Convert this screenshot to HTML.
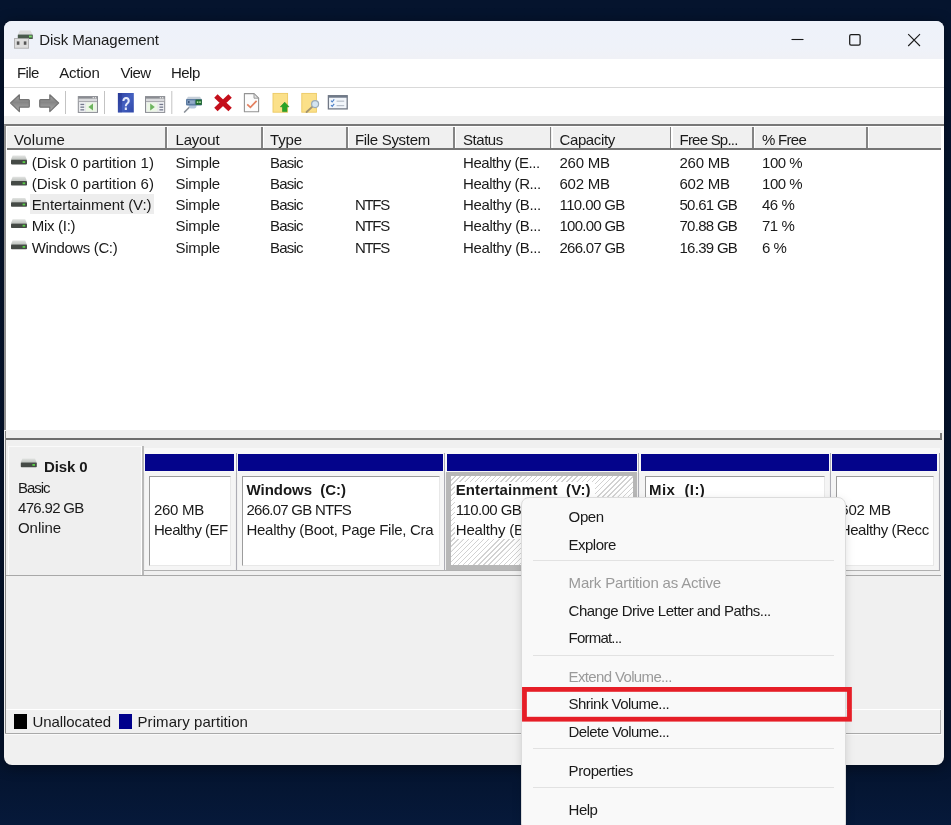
<!DOCTYPE html>
<html lang="en">
<head>
<meta charset="utf-8">
<title>Disk Management</title>
<style>
html,body{margin:0;padding:0;}
body{width:951px;height:825px;overflow:hidden;position:relative;background:linear-gradient(180deg,#05142e 0%,#04132d 92%,#06193a 100%);font-family:"Liberation Sans",sans-serif;font-size:15px;color:#1a1a1a;}
.abs,.t{position:absolute;}
.t{white-space:nowrap;line-height:20px;}
#layer{position:absolute;left:0;top:0;width:951px;height:825px;will-change:transform;}
.titlebar{left:4px;top:21px;width:940px;height:38px;background:linear-gradient(180deg,#eef2fa 0%,#eff2f9 70%,#f0f1f6 100%);border-radius:8px 8px 0 0;}
.menubar{left:4px;top:59px;width:940px;height:28px;background:#fff;}
.toolbar{left:4px;top:87px;width:940px;height:29px;background:#fff;border-top:1px solid #d9d9d9;box-sizing:border-box;}
.list{left:4px;top:124.3px;width:940px;height:306.2px;background:#fff;border-top:2px solid #787878;border-left:2px solid #8e8e8e;box-sizing:border-box;}
.hdr{left:7px;top:126px;width:934px;height:22px;background:#f0f0f0;border-bottom:2px solid #757575;box-sizing:content-box;}
.sel{left:29.7px;top:193.8px;width:124px;height:19.8px;background:#ededed;}
.split{left:5px;top:438.4px;width:936.6px;height:1.6px;background:#6f6f6f;}
.pane{left:6px;top:440px;width:935px;height:293px;background:#f0f0f0;}
.dlabel{left:7.5px;top:446px;width:132.5px;height:129px;background:#efefef;border-right:1px solid #fff;border-top:1px solid #fafafa;border-left:1px solid #fafafa;box-sizing:content-box;box-shadow:2px 0 0 #b9b9b9;}
.rowline{left:6px;top:575px;width:935px;height:1px;background:#a8a8a8;}
.bar{top:454px;height:17px;background:#04048b;}
.pframe{top:472px;height:98px;background:#e4e4e4;box-sizing:border-box;border:1px solid #c9c9c9;border-top:none;}
.pbody{top:475.5px;height:90px;background:#fff;box-sizing:border-box;border:1px solid #9c9c9c;border-right-color:#e8e8e8;border-bottom-color:#e8e8e8;}
.hatch{background:#fff repeating-linear-gradient(135deg,#fff 0,#fff 2.6px,#d2d2d2 2.7px,#d2d2d2 3.6px);}
.legendline{left:6px;top:709px;width:935px;height:1px;background:#fff;}
.statusline{left:5px;top:733px;width:936px;height:1.5px;background:#a9a9a9;}
.menu{left:520.6px;top:497px;width:325.6px;height:335px;background:#f9f9f9;border-radius:8px;border:1px solid #dcdcdc;box-sizing:border-box;box-shadow:0 3px 10px rgba(0,0,0,.13);}
.msep{left:533px;width:301px;height:1px;background:#e2e2e2;}
</style>
</head>
<body>
<div id="layer">
<div class="abs" style="left:4px;top:21px;width:940px;height:743.6px;border-radius:8px;background:#f0f0f0;box-shadow:0 2px 14px rgba(0,0,0,.4);"></div>
<div class="abs titlebar"></div>
<div class="abs menubar"></div>
<div class="abs toolbar"></div>
<div class="abs list"></div>
<div class="abs hdr"></div>
<div class="abs" style="left:165.3px;top:126.5px;width:1.7px;height:21.5px;background:#848484"></div><div class="abs" style="left:167.0px;top:126.5px;width:1.2px;height:21.5px;background:#fff"></div>
<div class="abs" style="left:261.0px;top:126.5px;width:1.7px;height:21.5px;background:#848484"></div><div class="abs" style="left:262.7px;top:126.5px;width:1.2px;height:21.5px;background:#fff"></div>
<div class="abs" style="left:346.1px;top:126.5px;width:1.7px;height:21.5px;background:#848484"></div><div class="abs" style="left:347.8px;top:126.5px;width:1.2px;height:21.5px;background:#fff"></div>
<div class="abs" style="left:453.2px;top:126.5px;width:1.7px;height:21.5px;background:#848484"></div><div class="abs" style="left:454.9px;top:126.5px;width:1.2px;height:21.5px;background:#fff"></div>
<div class="abs" style="left:549.8px;top:126.5px;width:1.7px;height:21.5px;background:#848484"></div><div class="abs" style="left:551.5px;top:126.5px;width:1.2px;height:21.5px;background:#fff"></div>
<div class="abs" style="left:669.7px;top:126.5px;width:1.7px;height:21.5px;background:#848484"></div><div class="abs" style="left:671.4px;top:126.5px;width:1.2px;height:21.5px;background:#fff"></div>
<div class="abs" style="left:752.3px;top:126.5px;width:1.7px;height:21.5px;background:#848484"></div><div class="abs" style="left:754.0px;top:126.5px;width:1.2px;height:21.5px;background:#fff"></div>
<div class="abs" style="left:866.2px;top:126.5px;width:1.7px;height:21.5px;background:#848484"></div><div class="abs" style="left:867.9px;top:126.5px;width:1.2px;height:21.5px;background:#fff"></div>
<div class="abs" style="left:7px;top:126.3px;width:935px;height:1.2px;background:#fff"></div>
<div class="abs sel"></div>
<div class="abs split"></div>
<div class="abs" style="left:4.8px;top:431px;width:1.5px;height:302.5px;background:#858585"></div>
<div class="abs" style="left:940px;top:433px;width:1.6px;height:6px;background:#7a7a7a"></div>
<div class="abs pane"></div>
<div class="abs dlabel"></div>
<div class="abs rowline"></div>
<div class="abs" style="left:144px;top:447.5px;width:796px;height:25px;background:#f8f8f8"></div>
<div class="abs bar" style="left:145px;width:89px"></div>
<div class="abs" style="left:144.5px;top:472px;width:90px;height:98px;background:#f5f5f5"></div>
<div class="abs pbody" style="left:149px;width:81.5px"></div>
<div class="abs bar" style="left:238px;width:205px"></div>
<div class="abs" style="left:237.5px;top:472px;width:206px;height:98px;background:#f5f5f5"></div>
<div class="abs pbody" style="left:242px;width:197.5px"></div>
<div class="abs bar" style="left:446.5px;width:190.5px"></div>
<div class="abs" style="left:446.0px;top:472px;width:191.0px;height:98px;background:#b7b7b7"></div>
<div class="abs hatch" style="left:450.5px;top:476px;width:182.5px;height:89px"></div>
<div class="abs bar" style="left:640.5px;width:188.0px"></div>
<div class="abs" style="left:640.0px;top:472px;width:189.0px;height:98px;background:#f5f5f5"></div>
<div class="abs pbody" style="left:644.5px;width:180.0px"></div>
<div class="abs bar" style="left:831.5px;width:105.5px"></div>
<div class="abs" style="left:831.0px;top:472px;width:106.5px;height:98px;background:#f5f5f5"></div>
<div class="abs pbody" style="left:835.5px;width:98.0px"></div>
<div class="abs" style="left:235.5px;top:453px;width:1.4px;height:118px;background:#adadb5"></div>
<div class="abs" style="left:444.0px;top:453px;width:1.4px;height:118px;background:#adadb5"></div>
<div class="abs" style="left:638.0px;top:453px;width:1.4px;height:118px;background:#adadb5"></div>
<div class="abs" style="left:829.5px;top:453px;width:1.4px;height:118px;background:#adadb5"></div>
<div class="abs" style="left:938.5px;top:453px;width:1.4px;height:118px;background:#adadb5"></div>
<div class="abs" style="left:144px;top:570px;width:796px;height:1px;background:#b0b0b0"></div>
<div class="abs" style="left:455px;top:481.5px;width:140px;height:19.5px;background:#fff"></div>
<div class="abs" style="left:455px;top:501px;width:110px;height:38px;background:#fff"></div>
<div class="abs legendline"></div>
<div class="abs" style="left:14px;top:714px;width:13px;height:15px;background:#000;"></div>
<div class="abs" style="left:119px;top:714px;width:13px;height:15px;background:#00008b;"></div>
<div class="abs statusline"></div>
<div class="abs" style="left:940px;top:710px;width:1px;height:23px;background:#b5b5b5"></div>
<div class="abs" style="left:5px;top:734.3px;width:937px;height:1px;background:#fafafa"></div>
<svg class="abs" style="left:0;top:0" width="951" height="825" viewBox="0 0 951 825">
<defs>
<linearGradient id="gArr" x1="0" y1="0" x2="0" y2="1"><stop offset="0" stop-color="#a4a4a4"/><stop offset="0.45" stop-color="#858585"/><stop offset="1" stop-color="#adadad"/></linearGradient>
<linearGradient id="gHelp" x1="0" y1="0" x2="1" y2="1"><stop offset="0" stop-color="#2c3f9f"/><stop offset="0.5" stop-color="#4460c0"/><stop offset="1" stop-color="#2f48a8"/></linearGradient>
<linearGradient id="gDisk" x1="0" y1="0" x2="0" y2="1"><stop offset="0" stop-color="#e2e4e2"/><stop offset="1" stop-color="#bcc0bc"/></linearGradient>
<g id="hdd">
<path d="M1.8 0 H14.4 L16.2 4.4 H0 Z" fill="url(#gDisk)"/>
<rect x="0.2" y="4.2" width="16" height="4.6" rx="0.8" fill="#454a46"/>
<rect x="11.8" y="5.6" width="2.6" height="1.8" fill="#58d046"/>
</g>
</defs>
<!-- back / forward arrows -->
<path d="M10.6 103 L19.4 94.8 V99.6 H28.4 Q29.3 99.6 29.3 100.5 V106.3 Q29.3 107.2 28.4 107.2 H19.4 V111.6 Z" fill="url(#gArr)" stroke="#747474" stroke-width="1.2" stroke-linejoin="round"/>
<path d="M58.6 103 L49.8 94.8 V99.6 H40.6 Q39.7 99.6 39.7 100.5 V106.3 Q39.7 107.2 40.6 107.2 H49.8 V111.6 Z" fill="url(#gArr)" stroke="#747474" stroke-width="1.2" stroke-linejoin="round"/>
<!-- separators -->
<rect x="65" y="91" width="1" height="23" fill="#c3c3c3"/>
<rect x="104" y="91" width="1" height="23" fill="#c3c3c3"/>
<rect x="171.3" y="91" width="1" height="23" fill="#c3c3c3"/>
<!-- show/hide tree -->
<g>
<rect x="78.3" y="96.6" width="19.2" height="15.8" fill="#e6e7ea" stroke="#8b8d93" stroke-width="1"/>
<rect x="78.3" y="96.6" width="19.2" height="2.2" fill="#8a8c92"/>
<rect x="92.6" y="97.1" width="1.4" height="1.2" fill="#e8e8e8"/><rect x="94.8" y="97.1" width="1.4" height="1.2" fill="#e8e8e8"/>
<rect x="78.8" y="98.8" width="18.2" height="2.4" fill="#d9dadd"/>
<rect x="78.8" y="101.2" width="18.2" height="0.8" fill="#9b9da3"/>
<rect x="79.6" y="102.6" width="5.4" height="9" fill="#f1f2f5"/>
<rect x="80.4" y="103.8" width="3.8" height="1.3" fill="#73788c"/><rect x="80.4" y="106.5" width="3.8" height="1.3" fill="#73788c"/><rect x="80.4" y="109.2" width="3.8" height="1.3" fill="#73788c"/>
<rect x="86" y="102.6" width="10.6" height="9" fill="#ecf6e6"/>
<path d="M93 103.6 V110.6 L88.4 107.1 Z" fill="#6db45f"/>
</g>
<!-- help -->
<g>
<rect x="117.9" y="93" width="15.9" height="19.5" fill="url(#gHelp)"/>
<rect x="117.9" y="93" width="4" height="19.5" fill="#1f2f86" opacity="0.35"/>
<text transform="translate(126.2 109.6) scale(0.82 1)" font-family="Liberation Sans, sans-serif" font-weight="bold" font-size="17.5" fill="#e6ebfb" text-anchor="middle">?</text>
</g>
<!-- action pane -->
<g>
<rect x="145.5" y="96.6" width="19.2" height="15.8" fill="#e6e7ea" stroke="#8b8d93" stroke-width="1"/>
<rect x="145.5" y="96.6" width="19.2" height="2.2" fill="#8a8c92"/>
<rect x="159.8" y="97.1" width="1.4" height="1.2" fill="#e8e8e8"/><rect x="162" y="97.1" width="1.4" height="1.2" fill="#e8e8e8"/>
<rect x="146" y="98.8" width="18.2" height="2.4" fill="#d9dadd"/>
<rect x="146" y="101.2" width="18.2" height="0.8" fill="#9b9da3"/>
<rect x="146.8" y="102.6" width="10.6" height="9" fill="#ecf6e6"/>
<path d="M150.2 103.6 V110.6 L154.8 107.1 Z" fill="#6db45f"/>
<rect x="158.6" y="102.6" width="5.4" height="9" fill="#f1f2f5"/>
<rect x="159.4" y="103.8" width="3.8" height="1.3" fill="#73788c"/><rect x="159.4" y="106.5" width="3.8" height="1.3" fill="#73788c"/><rect x="159.4" y="109.2" width="3.8" height="1.3" fill="#73788c"/>
</g>
<!-- connect -->
<g>
<path d="M184.6 112 L189.6 107" stroke="#8b9199" stroke-width="1.7" stroke-linecap="round"/>
<ellipse cx="192.6" cy="105.4" rx="4" ry="3.2" fill="#b4c6dc"/>
<path d="M188 96.8 H200 L201.8 99.2 H186.2 Z" fill="#c6cfd9"/>
<rect x="186" y="99" width="16" height="6.4" rx="0.8" fill="#5d7da3"/>
<rect x="187.4" y="100.4" width="7.4" height="3.4" fill="#93abc9"/>
<rect x="188" y="101" width="1.6" height="2.2" fill="#3f587c"/>
<rect x="195.6" y="99.6" width="6.2" height="5.2" fill="#1f6a2c"/>
<rect x="196.8" y="101.4" width="1.6" height="1.5" fill="#bff0b4"/><rect x="199.2" y="101.4" width="1.6" height="1.5" fill="#bff0b4"/>
</g>
<!-- red X -->
<path d="M215.9 96 L230.1 109.6 M230.1 96 L215.9 109.6" stroke="#c40f1b" stroke-width="4.9" stroke-linecap="butt"/>
<!-- doc check -->
<g>
<path d="M244.4 93.6 H254 L258.6 98.2 V111.8 H244.4 Z" fill="#fcfcfc" stroke="#939393" stroke-width="1.1" stroke-linejoin="round"/>
<path d="M254 93.6 V98.2 H258.6 Z" fill="#e4e4e4" stroke="#939393" stroke-width="0.9" stroke-linejoin="round"/>
<path d="M247.2 104.4 L250.4 107.4 L256.6 100.8" fill="none" stroke="#e4805f" stroke-width="1.7"/>
</g>
<!-- export list (yellow, green arrow) -->
<g>
<rect x="273" y="93.4" width="14.6" height="18.8" fill="#fbe089" stroke="#ecc963" stroke-width="0.9"/>
<path d="M284.7 102.2 L289 106.8 H286.9 V111.6 H282.5 V106.8 H280.4 Z" fill="#2aa427" stroke="#1f8f20" stroke-width="0.6" stroke-linejoin="round"/>
</g>
<!-- find (yellow, magnifier) -->
<g>
<rect x="301.8" y="93.4" width="14.6" height="18.8" fill="#fbe089" stroke="#ecc963" stroke-width="0.9"/>
<path d="M306.6 112 L312.4 106.6" stroke="#a3946f" stroke-width="1.9" stroke-linecap="round"/>
<circle cx="315.1" cy="104.1" r="3.5" fill="#d3e4f1" stroke="#9aa9b6" stroke-width="1.2"/>
</g>
<!-- checklist -->
<g>
<rect x="328.4" y="95.7" width="18.8" height="13.2" fill="#f2f6fb" stroke="#717885" stroke-width="1.3"/>
<rect x="328.4" y="95.7" width="18.8" height="2" fill="#6f7a89"/>
<path d="M331 100.6 l1.2 1.4 l2 -2.6 M331 105 l1.2 1.4 l2 -2.6" fill="none" stroke="#4a7fc8" stroke-width="1.1"/>
<rect x="336.6" y="100.6" width="7.6" height="1.2" fill="#b7bfca"/><rect x="336.6" y="105" width="7.6" height="1.2" fill="#b7bfca"/>
</g>
<!-- title icon -->
<g>
<path d="M20 30.6 H30.4 L32.6 34.2 H17.8 Z" fill="#dcdcdc"/>
<rect x="17.8" y="34.4" width="15" height="4.6" rx="0.6" fill="#4a5a4c"/>
<rect x="29" y="35.6" width="2.8" height="1.8" fill="#7be06a"/>
<rect x="14.4" y="38.6" width="14.2" height="9.6" fill="#dedede" stroke="#a7a7a7" stroke-width="0.8"/>
<rect x="16.8" y="41.4" width="2.6" height="3.4" fill="#555"/><rect x="23.8" y="41.4" width="2.6" height="3.4" fill="#555"/>
</g>
<!-- list disk icons -->
<use href="#hdd" x="10.8" y="155.6"/>
<use href="#hdd" x="10.8" y="176.8"/>
<use href="#hdd" x="10.8" y="198"/>
<use href="#hdd" x="10.8" y="219.2"/>
<use href="#hdd" x="10.8" y="240.4"/>
<use href="#hdd" x="20.6" y="458.4"/>
<!-- caption buttons -->
<path d="M791.5 39.5 H803.5" stroke="#1a1a1a" stroke-width="1.1"/>
<rect x="849.7" y="34.7" width="10.4" height="10.4" rx="1.4" fill="none" stroke="#1a1a1a" stroke-width="1.25"/>
<path d="M908.2 34.2 L920 46 M920 34.2 L908.2 46" stroke="#1a1a1a" stroke-width="1.1"/>
</svg>

<span class="t" style="left:39.2px;top:30.1px;color:#1b1b1b;letter-spacing:-0.075px;">Disk Management</span>
<span class="t" style="left:17.0px;top:63.1px;letter-spacing:-0.621px;">File</span>
<span class="t" style="left:59.3px;top:63.1px;letter-spacing:-0.237px;">Action</span>
<span class="t" style="left:120.6px;top:63.1px;letter-spacing:-0.614px;">View</span>
<span class="t" style="left:170.9px;top:63.1px;letter-spacing:-0.503px;">Help</span>
<span class="t" style="left:14.0px;top:130.0px;letter-spacing:0.173px;">Volume</span>
<span class="t" style="left:175.5px;top:130.0px;letter-spacing:-0.190px;">Layout</span>
<span class="t" style="left:270.0px;top:130.0px;letter-spacing:-0.152px;">Type</span>
<span class="t" style="left:355.0px;top:130.0px;letter-spacing:-0.320px;">File System</span>
<span class="t" style="left:463.0px;top:130.0px;letter-spacing:-0.460px;">Status</span>
<span class="t" style="left:559.5px;top:130.0px;letter-spacing:-0.381px;">Capacity</span>
<span class="t" style="left:679.5px;top:130.0px;letter-spacing:-0.775px;">Free Sp...</span>
<span class="t" style="left:762.0px;top:130.0px;letter-spacing:-0.702px;">% Free</span>
<span class="t" style="left:31.7px;top:152.8px;letter-spacing:0.030px;">(Disk 0 partition 1)</span>
<span class="t" style="left:175.5px;top:152.8px;letter-spacing:-0.247px;">Simple</span>
<span class="t" style="left:270.0px;top:152.8px;letter-spacing:-0.819px;">Basic</span>
<span class="t" style="left:463.0px;top:152.8px;letter-spacing:-0.443px;">Healthy (E...</span>
<span class="t" style="left:559.5px;top:152.8px;letter-spacing:-0.219px;">260 MB</span>
<span class="t" style="left:679.5px;top:152.8px;letter-spacing:-0.219px;">260 MB</span>
<span class="t" style="left:762.0px;top:152.8px;letter-spacing:-0.455px;">100 %</span>
<span class="t" style="left:31.7px;top:174.0px;letter-spacing:0.030px;">(Disk 0 partition 6)</span>
<span class="t" style="left:175.5px;top:174.0px;letter-spacing:-0.247px;">Simple</span>
<span class="t" style="left:270.0px;top:174.0px;letter-spacing:-0.819px;">Basic</span>
<span class="t" style="left:463.0px;top:174.0px;letter-spacing:-0.429px;">Healthy (R...</span>
<span class="t" style="left:559.5px;top:174.0px;letter-spacing:-0.219px;">602 MB</span>
<span class="t" style="left:679.5px;top:174.0px;letter-spacing:-0.219px;">602 MB</span>
<span class="t" style="left:762.0px;top:174.0px;letter-spacing:-0.455px;">100 %</span>
<span class="t" style="left:31.7px;top:195.2px;letter-spacing:-0.078px;">Entertainment (V:)</span>
<span class="t" style="left:175.5px;top:195.2px;letter-spacing:-0.247px;">Simple</span>
<span class="t" style="left:270.0px;top:195.2px;letter-spacing:-0.819px;">Basic</span>
<span class="t" style="left:355.0px;top:195.2px;letter-spacing:-1.335px;">NTFS</span>
<span class="t" style="left:463.0px;top:195.2px;letter-spacing:-0.362px;">Healthy (B...</span>
<span class="t" style="left:559.5px;top:195.2px;letter-spacing:-0.601px;">110.00 GB</span>
<span class="t" style="left:679.5px;top:195.2px;letter-spacing:-0.719px;">50.61 GB</span>
<span class="t" style="left:762.0px;top:195.2px;letter-spacing:-0.487px;">46 %</span>
<span class="t" style="left:31.7px;top:216.4px;letter-spacing:-0.270px;">Mix (I:)</span>
<span class="t" style="left:175.5px;top:216.4px;letter-spacing:-0.247px;">Simple</span>
<span class="t" style="left:270.0px;top:216.4px;letter-spacing:-0.819px;">Basic</span>
<span class="t" style="left:355.0px;top:216.4px;letter-spacing:-1.335px;">NTFS</span>
<span class="t" style="left:463.0px;top:216.4px;letter-spacing:-0.362px;">Healthy (B...</span>
<span class="t" style="left:559.5px;top:216.4px;letter-spacing:-0.732px;">100.00 GB</span>
<span class="t" style="left:679.5px;top:216.4px;letter-spacing:-0.719px;">70.88 GB</span>
<span class="t" style="left:762.0px;top:216.4px;letter-spacing:-0.487px;">71 %</span>
<span class="t" style="left:31.7px;top:237.6px;letter-spacing:-0.367px;">Windows (C:)</span>
<span class="t" style="left:175.5px;top:237.6px;letter-spacing:-0.247px;">Simple</span>
<span class="t" style="left:270.0px;top:237.6px;letter-spacing:-0.819px;">Basic</span>
<span class="t" style="left:355.0px;top:237.6px;letter-spacing:-1.335px;">NTFS</span>
<span class="t" style="left:463.0px;top:237.6px;letter-spacing:-0.362px;">Healthy (B...</span>
<span class="t" style="left:559.5px;top:237.6px;letter-spacing:-0.732px;">266.07 GB</span>
<span class="t" style="left:679.5px;top:237.6px;letter-spacing:-0.719px;">16.39 GB</span>
<span class="t" style="left:762.0px;top:237.6px;letter-spacing:-0.544px;">6 %</span>
<span class="t" style="left:44.0px;top:457.3px;font-weight:bold;letter-spacing:-0.128px;">Disk 0</span>
<span class="t" style="left:18.0px;top:477.5px;letter-spacing:-1.042px;">Basic</span>
<span class="t" style="left:18.0px;top:497.5px;letter-spacing:-0.673px;">476.92 GB</span>
<span class="t" style="left:18.0px;top:517.5px;letter-spacing:-0.065px;">Online</span>
<span class="t" style="left:154.0px;top:499.8px;letter-spacing:-0.310px;">260 MB</span>
<span class="t" style="left:154.0px;top:519.8px;letter-spacing:-0.496px;">Healthy (EF</span>
<span class="t" style="left:246.5px;top:479.8px;font-weight:bold;letter-spacing:-0.028px;">Windows&nbsp; (C:)</span>
<span class="t" style="left:246.5px;top:499.8px;letter-spacing:-0.745px;">266.07 GB NTFS</span>
<span class="t" style="left:246.5px;top:519.8px;letter-spacing:-0.284px;">Healthy (Boot, Page File, Cra</span>
<span class="t" style="left:455.8px;top:479.8px;font-weight:bold;letter-spacing:0.072px;">Entertainment&nbsp; (V:)</span>
<span class="t" style="left:455.8px;top:499.8px;letter-spacing:-0.578px;">110.00 GB</span>
<span class="t" style="left:455.8px;top:519.8px;letter-spacing:-0.193px;">Healthy (B</span>
<span class="t" style="left:649.0px;top:479.8px;font-weight:bold;letter-spacing:0.412px;">Mix&nbsp; (I:)</span>
<span class="t" style="left:840.3px;top:499.8px;letter-spacing:-0.182px;">602 MB</span>
<span class="t" style="left:839.7px;top:519.8px;letter-spacing:-0.392px;">Healthy (Recc</span>
<span class="t" style="left:32.5px;top:711.8px;letter-spacing:-0.068px;">Unallocated</span>
<span class="t" style="left:137.5px;top:711.8px;letter-spacing:0.079px;">Primary partition</span>
<div class="abs menu"></div>
<div class="abs msep" style="top:560.3px"></div>
<div class="abs msep" style="top:654.8px"></div>
<div class="abs msep" style="top:748px"></div>
<div class="abs msep" style="top:787px"></div>
<svg class="abs" style="left:515px;top:680px" width="345" height="50" viewBox="515 680 345 50"><rect x="524.45" y="689.4" width="325" height="29.8" fill="none" stroke="#e61e27" stroke-width="4.8"/></svg>
<span class="t" style="left:568.6px;top:507.3px;letter-spacing:-0.372px;">Open</span>
<span class="t" style="left:568.6px;top:534.8px;letter-spacing:-0.532px;">Explore</span>
<span class="t" style="left:568.6px;top:572.8px;color:#9a9a9a;letter-spacing:-0.184px;">Mark Partition as Active</span>
<span class="t" style="left:568.6px;top:601.2px;letter-spacing:-0.510px;">Change Drive Letter and Paths...</span>
<span class="t" style="left:568.6px;top:627.8px;letter-spacing:-0.802px;">Format...</span>
<span class="t" style="left:568.6px;top:666.8px;color:#9a9a9a;letter-spacing:-0.646px;">Extend Volume...</span>
<span class="t" style="left:568.6px;top:694.1px;letter-spacing:-0.537px;">Shrink Volume...</span>
<span class="t" style="left:568.6px;top:722.0px;letter-spacing:-0.591px;">Delete Volume...</span>
<span class="t" style="left:568.6px;top:761.0px;letter-spacing:-0.418px;">Properties</span>
<span class="t" style="left:568.6px;top:799.8px;letter-spacing:-0.503px;">Help</span>
</div>
</body>
</html>
